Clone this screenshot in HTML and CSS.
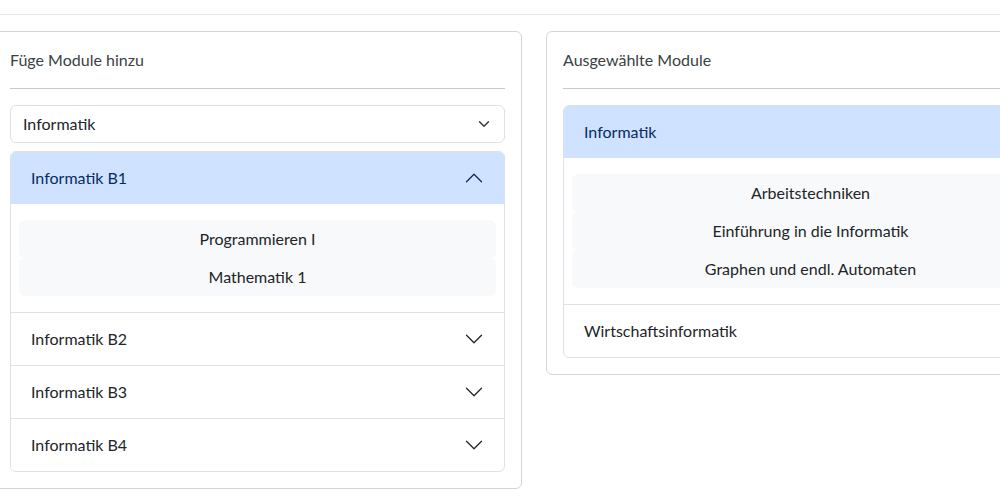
FILE: index.html
```html
<!DOCTYPE html>
<html lang="de">
<head>
<meta charset="utf-8">
<title>Module</title>
<link rel="stylesheet" href="styles.css">
</head>
<body>
<div class="page">
  <div class="topbar"></div>
  <div class="row">
    <section class="card">
      <div class="card-title">Füge Module hinzu</div>
      <hr class="sep">
      <div class="select">
        <span>Informatik</span>
        <svg class="select-chev" width="16" height="12" viewBox="0 0 16 16" fill="none" stroke="#343a40" stroke-width="2" stroke-linecap="round" stroke-linejoin="round"><path d="M2 5l6 6 6-6"/></svg>
      </div>
      <div class="acc acc-mt">
        <div class="acc-item">
          <div class="acc-head active">
            <span>Informatik B1</span>
            <svg class="chev up" width="20" height="20" viewBox="0 0 16 16" fill="none" stroke="#052c65" stroke-linecap="round" stroke-linejoin="round"><path d="M2 5L8 11L14 5"/></svg>
          </div>
          <div class="acc-body">
            <div class="mod">Programmieren I</div>
            <div class="mod">Mathematik 1</div>
          </div>
        </div>
        <div class="acc-item">
          <div class="acc-head">
            <span>Informatik B2</span>
            <svg class="chev" width="20" height="20" viewBox="0 0 16 16" fill="none" stroke="#212529" stroke-linecap="round" stroke-linejoin="round"><path d="M2 5L8 11L14 5"/></svg>
          </div>
        </div>
        <div class="acc-item">
          <div class="acc-head">
            <span>Informatik B3</span>
            <svg class="chev" width="20" height="20" viewBox="0 0 16 16" fill="none" stroke="#212529" stroke-linecap="round" stroke-linejoin="round"><path d="M2 5L8 11L14 5"/></svg>
          </div>
        </div>
        <div class="acc-item">
          <div class="acc-head">
            <span>Informatik B4</span>
            <svg class="chev" width="20" height="20" viewBox="0 0 16 16" fill="none" stroke="#212529" stroke-linecap="round" stroke-linejoin="round"><path d="M2 5L8 11L14 5"/></svg>
          </div>
        </div>
      </div>
    </section>

    <section class="card">
      <div class="card-title">Ausgewählte Module</div>
      <hr class="sep">
      <div class="acc">
        <div class="acc-item">
          <div class="acc-head active">
            <span>Informatik</span>
            <svg class="chev up" width="20" height="20" viewBox="0 0 16 16" fill="none" stroke="#052c65" stroke-linecap="round" stroke-linejoin="round"><path d="M2 5L8 11L14 5"/></svg>
          </div>
          <div class="acc-body">
            <div class="mod">Arbeitstechniken</div>
            <div class="mod">Einführung in die Informatik</div>
            <div class="mod">Graphen und endl. Automaten</div>
          </div>
        </div>
        <div class="acc-item">
          <div class="acc-head">
            <span>Wirtschaftsinformatik</span>
            <svg class="chev" width="20" height="20" viewBox="0 0 16 16" fill="none" stroke="#212529" stroke-linecap="round" stroke-linejoin="round"><path d="M2 5L8 11L14 5"/></svg>
          </div>
        </div>
      </div>
    </section>
  </div>
</div>
</body>
</html>
```
FILE: styles.css
```css
* { box-sizing: border-box; }
html, body {
  margin: 0;
  padding: 0;
  background: #fff;
}
body {
  font-family: "Segoe UI", Lato, "Noto Sans", sans-serif;
  font-size: 16px;
  line-height: 24px;
  color: #212529;
}
.page {
  width: 1000px;
  height: 500px;
  overflow: hidden;
}
.topbar {
  height: 15px;
  border-bottom: 1px solid #e3e5e8;
}
.row {
  display: flex;
  align-items: flex-start;
  gap: 24px;
  margin: 16px 0 0 -7px;
}
.card {
  flex: 0 0 529px;
  width: 529px;
  border: 1px solid #d4d5d7;
  border-radius: 6px;
  padding: 16px;
}
.card-title {
  height: 24px;
  color: #3a3f44;
}
.sep {
  margin: 16px 0;
  border: 0;
  border-top: 1px solid #c8c9ca;
  height: 0;
}
.select {
  height: 38px;
  border: 1px solid #dee2e6;
  border-radius: 6px;
  padding: 6px 12px;
  display: flex;
  align-items: center;
  justify-content: space-between;
}
.select-chev { display: block; }
.acc {
  border: 1px solid #dee2e6;
  border-radius: 6px;
  overflow: hidden;
}
.acc-mt { margin-top: 8px; }
.acc-item + .acc-item { border-top: 1px solid #dee2e6; }
.acc-head {
  height: 52px;
  padding: 0 20px;
  display: flex;
  align-items: center;
  justify-content: space-between;
  color: #212529;
}
.acc-head.active {
  background: #cfe2ff;
  color: #052c65;
}
.chev { display: block; }
.chev.up { transform: rotate(180deg); }
.acc-body {
  padding: 16px 8px;
}
.mod {
  height: 38px;
  line-height: 38px;
  text-align: center;
  background: #f8f9fa;
  border-radius: 6px;
  color: #212529;
}
```
